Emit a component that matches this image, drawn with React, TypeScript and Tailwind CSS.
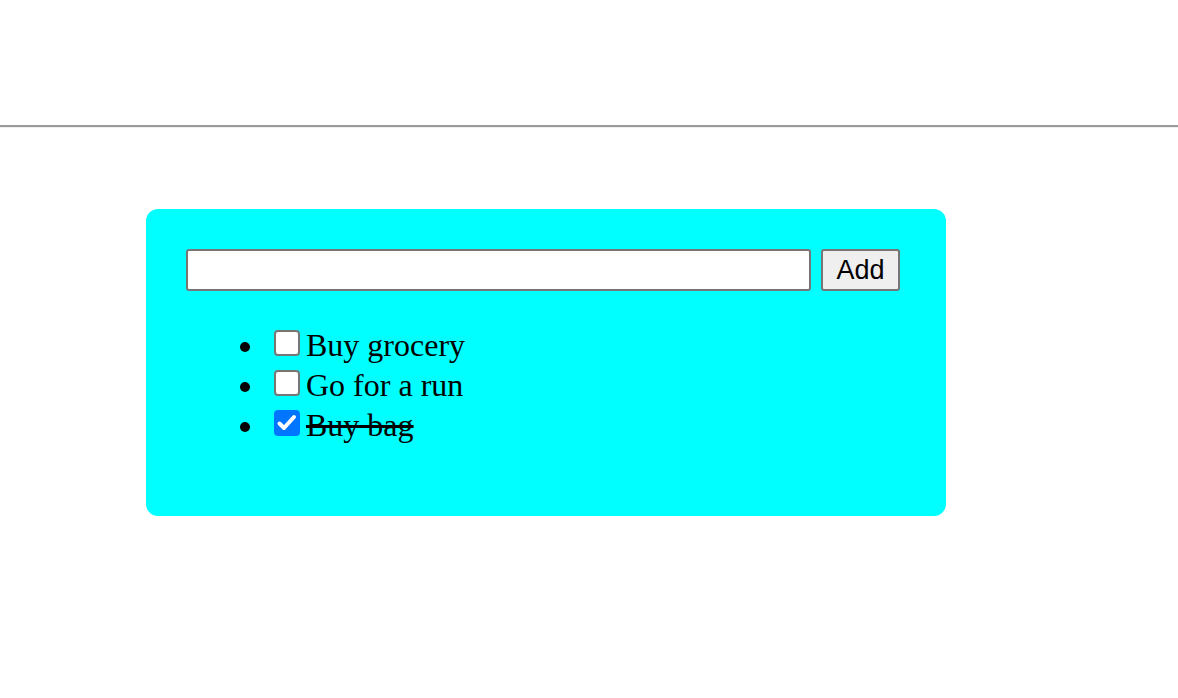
import React from "react";

function Check({ checked }: { checked: boolean }) {
  if (checked) {
    return (
      <span className="w-[26px] h-[26px] rounded-[4px] bg-[#0075ff] flex shrink-0">
        <svg width="26" height="26" viewBox="0 0 26 26">
          <path d="M5.5 13.5 L10 18 L20 7" stroke="white" strokeWidth="4" fill="none" strokeLinecap="round" strokeLinejoin="round" />
        </svg>
      </span>
    );
  }
  return <span className="w-[26px] h-[26px] rounded-[4px] bg-white border-2 border-[#767676] shrink-0" />;
}

export default function App() {
  const items = [
    { text: "Buy grocery", done: false },
    { text: "Go for a run", done: false },
    { text: "Buy bag", done: true },
  ];
  return (
    <div className="w-[1178px] h-[698px] bg-white" style={{ fontFamily: '"Liberation Serif", serif' }}>
      <div className="h-[125px]" />
      <div className="border-t-2 border-b border-t-[#9a9a9a] border-b-[#eeeeee]" />
      <div className="h-[81px]" />
      <div className="ml-[146px] w-[800px] h-[307px] bg-[#00ffff] rounded-[12px] pt-[40px] px-[40px]">
        <div className="flex items-center">
          <input
            type="text"
            className="w-[625px] h-[42px] bg-white border-2 border-[#767676] rounded-[3px] outline-none"
          />
          <button
            className="ml-[10px] w-[79px] h-[42px] bg-[#efefef] border-2 border-[#767676] rounded-[3px] text-[27px] text-black flex items-center justify-center"
            style={{ fontFamily: '"Liberation Sans", Arial, sans-serif' }}
          >
            Add
          </button>
        </div>
        <ul className="mt-[34px] text-[32px] leading-[40px] text-black">
          {items.map((it) => (
            <li key={it.text} className="flex items-center h-[40px] pl-[54px]">
              <span className="w-[10px] h-[10px] rounded-full bg-black translate-y-[2px] shrink-0" />
              <span className="ml-[24px] -translate-y-[2px] flex">
                <Check checked={it.done} />
              </span>
              <span className={"ml-[6px] " + (it.done ? "line-through" : "")}>{it.text}</span>
            </li>
          ))}
        </ul>
      </div>
    </div>
  );
}
